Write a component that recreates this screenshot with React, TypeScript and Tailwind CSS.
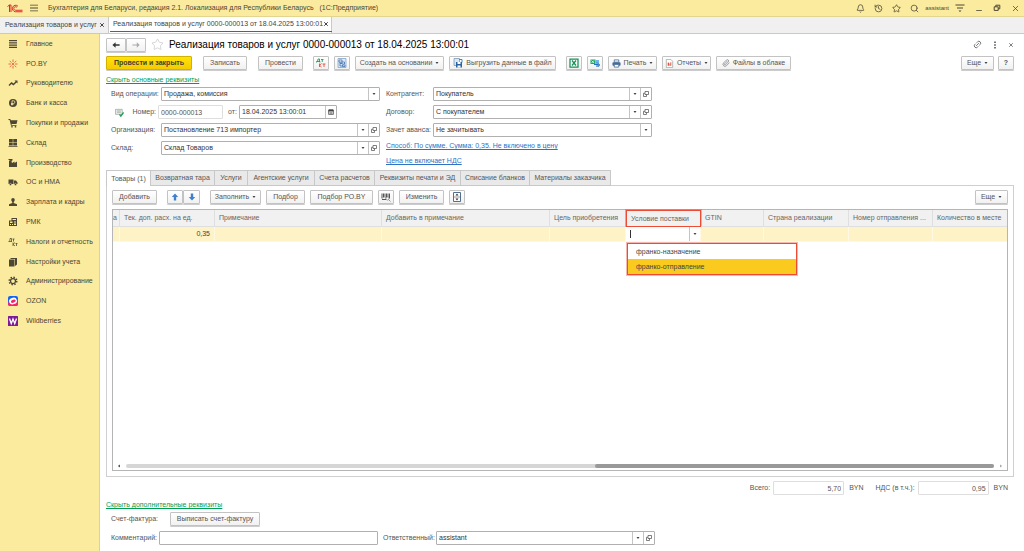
import { useState } from "react";
import type { ReactNode } from "react";
import clsx from "clsx";
import { Bell, History, Link2, Paperclip, Search, Star, X } from "lucide-react";

const OPTIONS = ["франко-назначение", "франко-отправление"];

const TABS = [
  { label: "Товары (1)", width: "w-[45px]" },
  { label: "Возвратная тара", width: "w-[64px]" },
  { label: "Услуги", width: "w-[33px]" },
  { label: "Агентские услуги", width: "w-[67px]" },
  { label: "Счета расчетов", width: "w-[60px]" },
  { label: "Реквизиты печати и ЭД", width: "w-[86px]" },
  { label: "Списание бланков", width: "w-[69px]" },
  { label: "Материалы заказчика", width: "w-[81px]" },
];

const COLUMNS = [
  { label: "а", width: "w-[7px]" },
  { label: "Тек. доп. расх. на ед.", width: "w-[95px]" },
  { label: "Примечание", width: "w-[167px]" },
  { label: "Добавить в примечание", width: "w-[168px]" },
  { label: "Цель приобретения", width: "w-[76px]" },
  { label: "Условие поставки", width: "w-[75px]" },
  { label: "GTIN", width: "w-[63px]" },
  { label: "Страна реализации", width: "w-[85px]" },
  { label: "Номер отправления ...", width: "w-[84px]" },
  { label: "Количество в месте", width: "" },
];

const Svg = ({ children, className = "size-[10px]" }: { children: ReactNode; className?: string }) => (
  <svg viewBox="0 0 20 20" className={clsx("shrink-0", className)} fill="currentColor" aria-hidden="true">
    {children}
  </svg>
);

const MENU = [
  {
    label: "Главное",
    icon: <path d="M2 2h16v2.400H2zM2 6.500h16v2.400H2zM2 11h16v2.400H2zM2 15.500h16V18H2z" />,
  },
  {
    label: "РО.BY",
    icon: (
      <g stroke="#e8603c" strokeWidth="1.800" fill="#e8603c">
        <path d="M10 1v5M10 14v5M1 10h5M14 10h5M3.500 4l3.500 3M13 13l3.500 3M16.500 4L13 7M7 13l-3.500 3" />
        <circle cx="10" cy="10" r="1.500" />
      </g>
    ),
  },
  {
    label: "Руководителю",
    icon: <path d="M1 14l6-6 4 3 4-4-2-2h6v6l-2-2-6 6-4-3-4 4z" />,
  },
  {
    label: "Банк и касса",
    icon: (
      <>
        <circle cx="10" cy="10" r="8" />
        <path d="M8 15V5.500h3a2.700 2.700 0 010 5.500H6M6 13h5" stroke="#faeb9e" strokeWidth="1.600" fill="none" />
      </>
    ),
  },
  {
    label: "Покупки и продажи",
    icon: (
      <>
        <path d="M1 2h3.500l1 2.500H19L17 12H7l.5 1.800H17v1.700H6L3.200 4H1z" />
        <circle cx="8" cy="17.500" r="1.700" />
        <circle cx="15" cy="17.500" r="1.700" />
      </>
    ),
  },
  {
    label: "Склад",
    icon: <path d="M2 2h7.500v6.500H2zM10.500 2H18v6.500h-7.500zM2 9.500h7.500V15H2zM10.500 9.500H18V15h-7.500zM1 16.300h18V18H1z" />,
  },
  {
    label: "Производство",
    icon: <path d="M2 18V6l2-2 4 1-1 2 1 3 5-3v3l5-3v11zM1 2h7l2 2-2 1-3-1H1z" />,
  },
  {
    label: "ОС и НМА",
    icon: (
      <>
        <path d="M1 5h10v9H1zM12 7h4l3 4v3h-7z" />
        <circle cx="5" cy="15" r="2.200" stroke="#faeb9e" />
        <circle cx="15" cy="15" r="2.200" stroke="#faeb9e" />
      </>
    ),
  },
  {
    label: "Зарплата и кадры",
    icon: <path d="M10 2a3.500 3.500 0 013.500 3.500c0 2-1 3.500-2 4.300V12l6.500 2.500V18H2v-3.500L8.500 12V9.800c-1-.8-2-2.300-2-4.300A3.500 3.500 0 0110 2z" />,
  },
  {
    label: "РМК",
    icon: (
      <>
        <path d="M7 2h11v16H2V7h5z" />
        <path d="M4 9h5v3H4zM4 14h2v2H4zM8 14h2v2H8zM12 9h4v2h-4zM12 13h4v3h-4zM9 4h7v2H9z" fill="#faeb9e" />
      </>
    ),
  },
  {
    label: "Налоги и отчетность",
    icon: (
      <path
        d="M1 9h7M2.500 8.500C4 7 4 5 4 3h3v6M9 4h4M11 4v5M10 11v7M14 11l-4 3.500 4 3.500M15 13h4M17 13v5"
        stroke="currentColor"
        strokeWidth="1.500"
        fill="none"
      />
    ),
  },
  {
    label: "Настройки учета",
    icon: <path d="M2 5h11v14H2zM4 4l2-2h12v13l-4 3V4z" />,
  },
  {
    label: "Администрирование",
    icon: (
      <g fill="none" stroke="currentColor">
        <circle cx="10" cy="10" r="5" strokeWidth="2.500" />
        <circle cx="10" cy="10" r="7.500" strokeWidth="3" strokeDasharray="2.900 2.990" />
      </g>
    ),
  },
];

const Caret = () => (
  <svg viewBox="0 0 6 4" className="h-[2px] w-[4px] shrink-0" fill="#444" aria-hidden="true">
    <path d="M0 0h6L3 4z" />
  </svg>
);

const OpenIcon = () => (
  <svg viewBox="0 0 12 12" className="size-[6px]" fill="none" stroke="#555" strokeWidth="1.500" aria-hidden="true">
    <path d="M4 1h7v6H4zM4 4.500H1V11h6V7" />
  </svg>
);

type ButtonProps = { children?: ReactNode; icon?: ReactNode; width: string; menu?: boolean; primary?: boolean; label?: string };

const Button = ({ children, icon, width, menu, primary, label }: ButtonProps) => (
  <button
    type="button"
    aria-label={label}
    className={clsx(
      "flex h-[14px] shrink-0 items-center justify-center gap-[3px] rounded-[1px] border whitespace-nowrap shadow-[0_1px_0_#ccc]",
      primary
        ? "border-[#d3b100] bg-linear-to-b from-[#ffe20a] to-[#f5cb00] font-bold text-[#454030]"
        : "border-[#c3c3c3] bg-linear-to-b from-white to-[#f1f1f1]",
      width
    )}
  >
    {icon}
    {children}
    {menu && <Caret />}
  </button>
);

type FieldProps = { id: string; label: string; value: string; labelWidth: string; open?: boolean };

const SelectField = ({ id, label, value, labelWidth, open }: FieldProps) => (
  <div className="flex items-center">
    <label htmlFor={id} className={clsx("shrink-0 whitespace-nowrap", labelWidth)}>
      {label}
    </label>
    <div className="flex h-[14px] min-w-0 flex-1 rounded-[1px] border border-[#b0b0b0] bg-white">
      <select id={id} defaultValue={value} className="min-w-0 flex-1 appearance-none pl-[2px] text-[#333] outline-none">
        <option>{value}</option>
      </select>
      <span className="flex w-[11px] items-center justify-center border-l border-[#c4c4c4]">
        <Caret />
      </span>
      {open && (
        <button type="button" aria-label="Открыть" className="flex w-[11px] items-center justify-center border-l border-[#c4c4c4]">
          <OpenIcon />
        </button>
      )}
    </div>
  </div>
);

const TitleBar = () => (
  <header className="flex h-[17px] items-center border-b border-[#e2d58f] bg-[#faeb9e] pr-[4px] pl-[7px] text-[#4c4634]">
    <svg viewBox="0 0 32 18" className="h-[9px] w-[16px]" fill="none" stroke="#e0282e" strokeWidth="2" aria-label="1С">
      <path d="M1 5l4-3v14M8 16V2L5 2" />
      <path d="M22 4.500A6.500 6.500 0 1017 15.500h14M20 7a3.500 3.500 0 10-3 5.500h14" />
    </svg>
    <button type="button" aria-label="Меню" className="ml-[7px]">
      <Svg className="size-[8px]">
        <path d="M0 2h20v2H0zM0 9h20v2H0zM0 16h20v2H0z" />
      </Svg>
    </button>
    <h1 className="ml-[10px] flex-1 whitespace-pre">
      Бухгалтерия для Беларуси, редакция 2.1. Локализация для Республики Беларусь   (1С:Предприятие)
    </h1>
    <div className="flex items-center gap-[9px]">
      <button type="button" aria-label="Уведомления"><Bell className="size-[9px]" /></button>
      <button type="button" aria-label="История"><History className="size-[9px]" /></button>
      <button type="button" aria-label="Избранное"><Star className="size-[9px]" /></button>
      <button type="button" aria-label="Поиск"><Search className="size-[9px]" /></button>
    </div>
    <span className="ml-[6px] text-[6px]">assistant</span>
    <button type="button" aria-label="Настройки" className="ml-[6px]">
      <Svg>
        <path d="M1 3h18v2H1zM4 9h12v2H4zM7 15h6l-3 3z" />
      </Svg>
    </button>
    <div className="ml-[10px] flex items-center gap-[10px]">
      <button type="button" aria-label="Свернуть"><Svg className="size-[8px]"><path d="M3 15h14v2H3z" /></Svg></button>
      <button type="button" aria-label="Восстановить">
        <Svg className="size-[8px]">
          <path d="M3 7h10v9H3zM7 7V3h10v9h-4" fill="none" stroke="currentColor" strokeWidth="2.500" />
        </Svg>
      </button>
      <button type="button" aria-label="Закрыть"><X className="size-[9px]" /></button>
    </div>
  </header>
);

const WindowTabs = () => (
  <div className="flex h-[17px] border-b border-[#c9c9c9] bg-[#f0f0f0] whitespace-nowrap text-[#444]">
    <div className="flex w-[109px] items-center justify-between border-r border-[#c9c9c9] pr-[3px] pl-[5px]">
      <a href="#list">Реализация товаров и услуг</a>
      <button type="button" aria-label="Закрыть"><X className="size-[6px]" strokeWidth={4} /></button>
    </div>
    <div className="flex w-[223px] border-r border-[#c9c9c9] bg-white px-[1px]">
      <div className="flex h-[15px] flex-1 items-center justify-between border-b border-[#009646] px-[3px]">
        <a href="#doc">Реализация товаров и услуг 0000-000013 от 18.04.2025 13:00:01</a>
        <button type="button" aria-label="Закрыть"><X className="size-[6px]" strokeWidth={4} /></button>
      </div>
    </div>
  </div>
);

const Sidebar = () => (
  <nav className="w-[100px] shrink-0 border-r border-[#ddd19a] bg-[#faeb9e] text-[#4c4634]">
    <ul className="flex h-[297px] flex-col">
      {MENU.map((item) => (
        <li key={item.label} className="flex flex-1 items-center">
          <a href="#section" className="flex items-center gap-[8px] pl-[8px] whitespace-nowrap">
            <Svg>{item.icon}</Svg>
            {item.label}
          </a>
        </li>
      ))}
      <li className="flex flex-1 items-center">
        <a href="#section" className="flex items-center gap-[8px] pl-[8px]">
          <Svg>
            <rect width="20" height="20" rx="4" fill="#1264f5" />
            <path d="M0 13l20-6v9a4 4 0 01-4 4H4a4 4 0 01-4-4z" fill="#f5266a" />
            <ellipse cx="10" cy="10" rx="8" ry="6.500" fill="#fff" transform="rotate(-20 10 10)" />
            <ellipse cx="10.500" cy="10.500" rx="5" ry="3" fill="#f5266a" transform="rotate(-20 10 10)" />
          </Svg>
          OZON
        </a>
      </li>
      <li className="flex flex-1 items-center">
        <a href="#section" className="flex items-center gap-[8px] pl-[8px]">
          <Svg>
            <rect width="20" height="20" rx="1" fill="#7b1c96" />
            <path d="M3 5l3.500 10L10 6l3.500 9L17 5" fill="none" stroke="#fff" strokeWidth="2.600" />
          </Svg>
          Wildberries
        </a>
      </li>
    </ul>
  </nav>
);

const CommandBar = () => (
  <div className="mt-[5px] flex items-center">
    <Button width="w-[86px]" primary>Провести и закрыть</Button>
    <div className="ml-[11px] flex gap-[11px]">
      <Button width="w-[44px]">Записать</Button>
      <Button width="w-[45px]">Провести</Button>
    </div>
    <div className="ml-[10px] flex gap-[5px]">
      <Button
        width="w-[16px]"
        label="Проводки"
        icon={
          <Svg>
            <path d="M1 9V7h7v2M3 7l1-5h3v5M10 3h5M12.500 3v5" stroke="#0a9a50" strokeWidth="1.700" fill="none" />
            <path d="M7 11v7M11 11l-4 3.500 4 3.500M13 12h6M16 12v6" stroke="#e5423a" strokeWidth="1.700" fill="none" />
          </Svg>
        }
      />
      <Button
        width="w-[16px]"
        label="Структура подчиненности"
        icon={
          <Svg>
            <path d="M2 1h16v18H2z" fill="#dce9f7" stroke="#7ba0cb" strokeWidth="1.500" />
            <path d="M4 4h6v4H4zM10 8h5v4h-5zM11 14h5v3h-5z" fill="#fff" stroke="#3569a8" strokeWidth="1.500" />
            <path d="M6 8v8h5M6 11h4" fill="none" stroke="#3569a8" strokeWidth="1.500" />
          </Svg>
        }
      />
      <Button width="w-[89px]" menu>Создать на основании</Button>
      <Button
        width="w-[107px]"
        icon={
          <Svg>
            <path d="M2 1h11v14H2z" fill="#d9e6f3" stroke="#7895b3" strokeWidth="1.500" />
            <path d="M6 8h12v11H6z" fill="#2b62a0" />
            <path d="M9 8h6v4H9zM9 15h6v4H9z" fill="#fff" />
            <path d="M12 3h6v6" fill="none" stroke="#2b8cd5" strokeWidth="2" />
          </Svg>
        }
      >
        Выгрузить данные в файл
      </Button>
    </div>
    <div className="ml-[10px] flex gap-[5px]">
      <Button
        width="w-[16px]"
        label="Excel"
        icon={
          <Svg>
            <path d="M2 2h16v16H2z" fill="#fff" stroke="#169154" strokeWidth="2.500" />
            <path d="M6 5l8 10M14 5L6 15" stroke="#169154" strokeWidth="2.500" />
          </Svg>
        }
      />
      <Button
        width="w-[16px]"
        label="Обмен"
        icon={
          <Svg>
            <path d="M1 3h10v9H1z" fill="#25a668" />
            <path d="M3 5l5 5M8 5l-5 5" stroke="#fff" strokeWidth="1.500" />
            <path d="M11 4h7v6h-7z" fill="#72b5e8" />
            <path d="M8 13h8M14 9v9M16 11l3 3-3 3" stroke="#2671bd" strokeWidth="2.200" fill="none" />
          </Svg>
        }
      />
      <Button
        width="w-[49px]"
        menu
        icon={
          <Svg className="size-[9px]">
            <path d="M5 2h10v5H5z" fill="#fff" stroke="#466b96" strokeWidth="1.800" />
            <rect x="1" y="7" width="18" height="8" rx="2" fill="#466b96" />
            <path d="M5 12h10v6H5z" fill="#fff" stroke="#466b96" strokeWidth="1.800" />
          </Svg>
        }
      >
        Печать
      </Button>
      <Button
        width="w-[49px]"
        menu
        icon={
          <Svg className="size-[9px]">
            <path d="M3 1h10l4 4v14H3z" fill="#fff" stroke="#9a9a9a" strokeWidth="1.500" />
            <path d="M6 8h3v7H6z" fill="#e34e3c" />
            <path d="M10 10h2v5h-2z" fill="#3f9b55" />
            <path d="M12 7h2v8h-2z" fill="#e34e3c" />
          </Svg>
        }
      >
        Отчеты
      </Button>
      <Button width="w-[75px]" icon={<Paperclip className="size-[8px] text-[#777]" />}>Файлы в облаке</Button>
    </div>
    <div className="ml-auto flex gap-[4px]">
      <Button width="w-[33px]" menu>Еще</Button>
      <Button width="w-[16px]"><b>?</b></Button>
    </div>
  </div>
);

const DocumentFields = () => (
  <div className="mt-[2px] flex pl-[5px]">
    <div className="flex w-[269px] flex-col gap-[4px]">
      <SelectField id="operation" label="Вид операции:" value="Продажа, комиссия" labelWidth="w-[50px]" />
      <div className="flex items-center">
        <Svg className="ml-[4px] size-[9px]">
          <path d="M1 3h15v11H1z" fill="#eef2ee" stroke="#8a9a95" strokeWidth="1.500" />
          <path d="M4 6.500h9M4 9.500h9" stroke="#8a9a95" strokeWidth="1.500" />
          <path d="M10 14l3 4 6-8" fill="none" stroke="#1aa052" strokeWidth="3" />
        </Svg>
        <label htmlFor="number" className="w-[32px] text-right">Номер:</label>
        <input id="number" defaultValue="0000-000013" className="ml-[2px] h-[14px] w-[65px] rounded-[1px] border border-[#dedede] px-[2px]" />
        <label htmlFor="date" className="w-[16px] pl-[5px]">от:</label>
        <div className="flex h-[14px] w-[98px] rounded-[1px] border border-[#b0b0b0]">
          <input id="date" defaultValue="18.04.2025 13:00:01" className="min-w-0 flex-1 pl-[2px] text-[#333] outline-none" />
          <button type="button" aria-label="Календарь" className="flex w-[11px] items-center justify-center border-l border-[#c4c4c4]">
            <Svg className="size-[6px]">
              <path d="M2 3h16v15H2z" fill="none" stroke="#444" strokeWidth="2.500" />
              <path d="M2 3h16v5H2zM5 0h3v3H5zM12 0h3v3h-3zM5 10h10v2H5zM5 14h10v2H5z" fill="#444" />
            </Svg>
          </button>
        </div>
      </div>
      <SelectField id="company" label="Организация:" value="Постановление 713 импортер" labelWidth="w-[50px]" open />
      <SelectField id="stock" label="Склад:" value="Склад Товаров" labelWidth="w-[50px]" open />
    </div>
    <div className="ml-[6px] flex w-[266px] flex-col gap-[4px]">
      <SelectField id="partner" label="Контрагент:" value="Покупатель" labelWidth="w-[47px]" open />
      <SelectField id="contract" label="Договор:" value="С покупателем" labelWidth="w-[47px]" open />
      <SelectField id="advance" label="Зачет аванса:" value="Не зачитывать" labelWidth="w-[47px]" />
      <a href="#method" className="text-[#2f72c4] underline">Способ: По сумме. Сумма: 0,35. Не включено в цену</a>
      <a href="#vat" className="mt-[1px] text-[#2f72c4] underline">Цена не включает НДС</a>
    </div>
  </div>
);

const GoodsTable = () => {
  const [terms, setTerms] = useState("");
  const [selected, setSelected] = useState(OPTIONS[1]);

  return (
    <div className="flex min-h-[100px] flex-1 flex-col border border-[#b5b5b5]">
      <table className="w-full table-fixed border-separate border-spacing-0">
        <thead>
          <tr className="h-[17px] bg-[#f1f1f1] text-[#666]">
            {COLUMNS.map((column, index) => (
              <th
                key={column.label}
                className={clsx(
                  "border-b text-left font-normal whitespace-nowrap",
                  column.width,
                  index === 0 ? "pl-0" : "pl-[4px]",
                  index === 5
                    ? "border border-[#ee4b34] ring-1 ring-[#ee4b34]/40"
                    : "border-r border-[#dfdfdf] last:border-r-0"
                )}
              >
                {column.label}
              </th>
            ))}
          </tr>
        </thead>
        <tbody>
          <tr className="h-[15px] bg-[#fef2c7]">
            {COLUMNS.map((column, index) => (
              <td key={column.label} className={clsx("border-r border-b border-[#fff9e4] p-0 last:border-r-0", index === 5 && "relative bg-white")}>
                {index === 1 && <div className="pr-[4px] text-right text-[#444]">0,35</div>}
                {index === 5 && (
                  <>
                    <div className="flex h-[14px] items-stretch">
                      <span className="my-[3px] ml-[4px] w-px bg-[#333]" />
                      <input
                        aria-label="Условие поставки"
                        value={terms}
                        onChange={(e) => setTerms(e.target.value)}
                        className="min-w-0 flex-1 outline-none"
                      />
                      <button type="button" aria-label="Выбрать" className="flex w-[11px] items-center justify-center border-l border-[#c4c4c4]">
                        <Caret />
                      </button>
                    </div>
                    <ul
                      role="listbox"
                      aria-label="Условие поставки"
                      className="absolute top-[16px] left-[1px] z-10 w-[170px] border border-[#ee4b34] bg-white text-[#444] ring-1 ring-[#ee4b34]/40"
                    >
                      {OPTIONS.map((option) => (
                        <li
                          key={option}
                          role="option"
                          aria-selected={option === selected}
                          onClick={() => {
                            setSelected(option);
                            setTerms(option);
                          }}
                          className={clsx("flex h-[15px] items-center pl-[8px]", option === selected && "bg-[#fbca1f]")}
                        >
                          {option}
                        </li>
                      ))}
                    </ul>
                  </>
                )}
              </td>
            ))}
          </tr>
        </tbody>
      </table>
      <div className="mt-auto flex h-[8px] items-center gap-[5px] px-[4px] text-[#555]">
        <Svg className="size-[4px]"><path d="M15 2v16L4 10z" /></Svg>
        <div className="flex h-[4px] flex-1 justify-end rounded-full bg-[#d6d6d6]">
          <div className="w-[46%] rounded-full bg-[#999]" />
        </div>
        <Svg className="size-[4px] text-[#aaa]"><path d="M5 2v16l11-8z" /></Svg>
      </div>
    </div>
  );
};

const GoodsPanel = () => (
  <section className="mt-[4px] flex flex-1 flex-col">
    <div role="tablist" className="relative z-10 -mb-px flex">
      {TABS.map((tab, index) => (
        <button
          key={tab.label}
          type="button"
          role="tab"
          aria-selected={index === 0}
          className={clsx(
            "h-[16px] border-t border-r border-[#c8c8c8] whitespace-nowrap first:border-l",
            tab.width,
            index === 0 ? "bg-white" : "border-b bg-[#e9e9e9]"
          )}
        >
          {tab.label}
        </button>
      ))}
    </div>
    <div className="flex flex-1 flex-col border border-[#cfcfcf] px-[5px] pt-[4px] pb-[5px]">
      <div className="mb-[5px] flex gap-[5px]">
        <Button width="w-[45px]">Добавить</Button>
        <div className="mx-[5px] flex">
          <Button width="w-[16px]" label="Вверх" icon={<Svg className="size-[8px] text-[#3f80cc]"><path d="M10 1l8 9h-5v9H7v-9H2z" /></Svg>} />
          <Button width="w-[17px]" label="Вниз" icon={<Svg className="size-[8px] text-[#3f80cc]"><path d="M10 19l8-9h-5V1H7v9H2z" /></Svg>} />
        </div>
        <Button width="w-[51px]" menu>Заполнить</Button>
        <Button width="w-[39px]">Подбор</Button>
        <Button width="w-[63px]">Подбор РО.BY</Button>
        <Button
          width="w-[16px]"
          label="Штрихкод"
          icon={
            <Svg>
              <path d="M1 3h2v10H1zM4 3h3v8H4zM8 3h1v10H8zM10 3h3v8h-3zM14 3h1v7h-1zM16 3h2v10h-2zM2 14h8v2H2z" fill="#555" />
              <circle cx="13" cy="13" r="3" fill="#fff" stroke="#777" strokeWidth="1.500" />
              <path d="M15 15l4 4" stroke="#b98a60" strokeWidth="2" />
            </Svg>
          }
        />
        <Button width="w-[45px]">Изменить</Button>
        <Button
          width="w-[16px]"
          label="Развернуть"
          icon={
            <Svg>
              <path d="M3 1h14v18H3z" fill="#fff" stroke="#3f5f82" strokeWidth="1.800" />
              <path d="M10 3l3 4H7zM10 17l3-4H7zM5 9h2v2H5zM9 9h2v2H9zM13 9h2v2h-2z" fill="#333" />
            </Svg>
          }
        />
        <div className="ml-auto">
          <Button width="w-[33px]" menu>Еще</Button>
        </div>
      </div>
      <GoodsTable />
    </div>
  </section>
);

const Totals = () => (
  <div className="mt-[4px] flex items-center justify-end pr-[6px]">
    <label htmlFor="total">Всего:</label>
    <input id="total" readOnly value="5,70" className="ml-[3px] h-[14px] w-[71px] rounded-[1px] border border-[#dedede] pr-[2px] text-right" />
    <span className="ml-[5px]">BYN</span>
    <label htmlFor="vat-total" className="ml-[12px]">НДС (в т.ч.):</label>
    <input id="vat-total" readOnly value="0,95" className="ml-[3px] h-[14px] w-[71px] rounded-[1px] border border-[#dedede] pr-[2px] text-right" />
    <span className="ml-[5px]">BYN</span>
  </div>
);

export default function App() {
  return (
    <div className="flex min-h-screen flex-col bg-white font-['Liberation_Sans',Arial,sans-serif] text-[7px] leading-[10px] text-[#555]">
      <TitleBar />
      <WindowTabs />
      <div className="flex flex-1">
        <Sidebar />
        <main className="flex min-w-0 flex-1 flex-col pt-[4px] pr-[10px] pb-[6px] pl-[6px]">
          <div className="flex h-[13px] items-center">
            <div className="flex">
              <Button width="w-[20px]" label="Назад" icon={<Svg className="size-[8px] text-[#333]"><path d="M9 3v5h10v4H9v5L1 10z" /></Svg>} />
              <Button width="w-[20px]" label="Вперед" icon={<Svg className="size-[8px] text-[#aaa]"><path d="M12 3v6H1v2h11v6l7-7z" /></Svg>} />
            </div>
            <button type="button" aria-label="В избранное" className="ml-[5px]">
              <Star className="size-[13px] text-[#b5b5b5]" strokeWidth={1} />
            </button>
            <h2 className="ml-[5px] text-[10px] text-black">Реализация товаров и услуг 0000-000013 от 18.04.2025 13:00:01</h2>
            <div className="ml-auto flex items-center gap-[9px]">
              <button type="button" aria-label="Ссылка"><Link2 className="size-[9px] -rotate-45" /></button>
              <button type="button" aria-label="Действия">
                <Svg className="size-[8px]"><path d="M8 1h4v4H8zM8 8h4v4H8zM8 15h4v4H8z" /></Svg>
              </button>
              <button type="button" aria-label="Закрыть"><X className="size-[6px]" strokeWidth={3} /></button>
            </div>
          </div>
          <CommandBar />
          <a href="#main" className="mt-[5px] self-start text-[#009e52] underline">Скрыть основные реквизиты</a>
          <DocumentFields />
          <GoodsPanel />
          <Totals />
          <a href="#extra" className="mt-[5px] self-start text-[#009e52] underline">Скрыть дополнительные реквизиты</a>
          <div className="mt-[2px] flex items-center pl-[5px]">
            <span className="w-[59px]">Счет-фактура:</span>
            <Button width="w-[90px]">Выписать счет-фактуру</Button>
          </div>
          <div className="mt-[5px] flex items-center pl-[5px]">
            <label htmlFor="comment" className="w-[48px]">Комментарий:</label>
            <input id="comment" className="h-[14px] w-[219px] rounded-[1px] border border-[#b0b0b0] px-[2px]" />
            <div className="ml-[5px] w-[272px]">
              <SelectField id="responsible" label="Ответственный:" value="assistant" labelWidth="w-[53px]" open />
            </div>
          </div>
        </main>
      </div>
    </div>
  );
}
